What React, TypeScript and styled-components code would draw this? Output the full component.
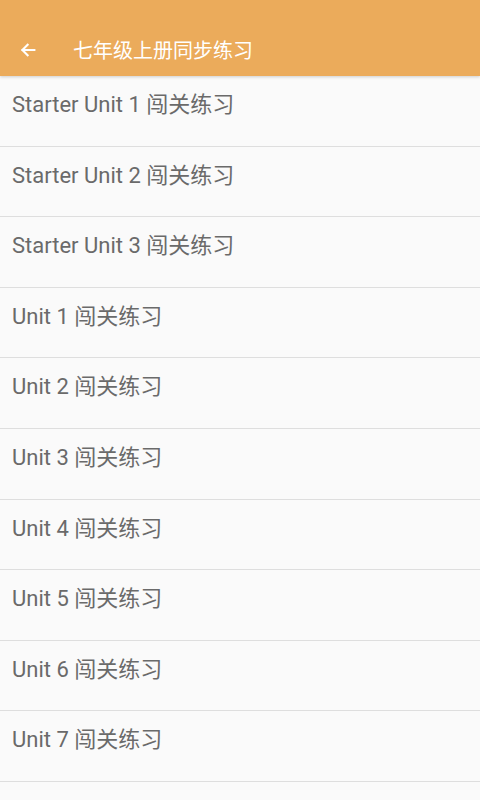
import React from 'react';
import styled, { createGlobalStyle } from 'styled-components';

const GlobalStyle = createGlobalStyle`
  html, body {
    margin: 0;
    padding: 0;
    background: #fafafa;
  }
  body {
    font-family: Roboto, "Noto Sans CJK SC", sans-serif;
  }
`;

const units = [
  'Starter Unit 1',
  'Starter Unit 2',
  'Starter Unit 3',
  'Unit 1',
  'Unit 2',
  'Unit 3',
  'Unit 4',
  'Unit 5',
  'Unit 6',
  'Unit 7',
];

export default function App() {
  return (
    <>
      <GlobalStyle />
      <Page>
        <Header>
          <BackButton aria-label="back">
            <svg width="18" height="18" viewBox="0 0 24 24" fill="none">
              <path
                d="M20.5 12H4.5M11.5 5l-7 7 7 7"
                stroke="#fff"
                strokeWidth="2.8"
                strokeLinecap="square"
              />
            </svg>
          </BackButton>
          <Title>七年级上册同步练习</Title>
        </Header>
        <List>
          {units.map((u) => (
            <Row key={u}>{u} 闯关练习</Row>
          ))}
        </List>
      </Page>
    </>
  );
}

const Page = styled.div`
  width: 480px;
  height: 800px;
  overflow: hidden;
  background: #fafafa;
`;

const Header = styled.header`
  height: 52px;
  padding-top: 24px;
  background: #ebab5b;
  display: flex;
  align-items: center;
  box-shadow: 0 1px 3px rgba(0, 0, 0, 0.18);
  position: relative;
  z-index: 1;
`;

const BackButton = styled.button`
  width: 56px;
  height: 52px;
  padding: 0 0 0 19px;
  border: none;
  background: transparent;
  display: flex;
  align-items: center;
`;

const Title = styled.h1`
  margin: -2px 0 0 17px;
  font-size: 20px;
  font-weight: 400;
  color: #fff;
  font-family: Roboto, "Noto Sans CJK SC", sans-serif;
`;

const List = styled.ul`
  list-style: none;
  margin: 0;
  padding: 0;
`;

const Row = styled.li`
  box-sizing: border-box;
  height: 70.6px;
  padding: 14px 12px 0;
  border-bottom: 1px solid #dedede;
  font-size: 22px;
  line-height: 30px;
  color: #6a6a6a;
`;
